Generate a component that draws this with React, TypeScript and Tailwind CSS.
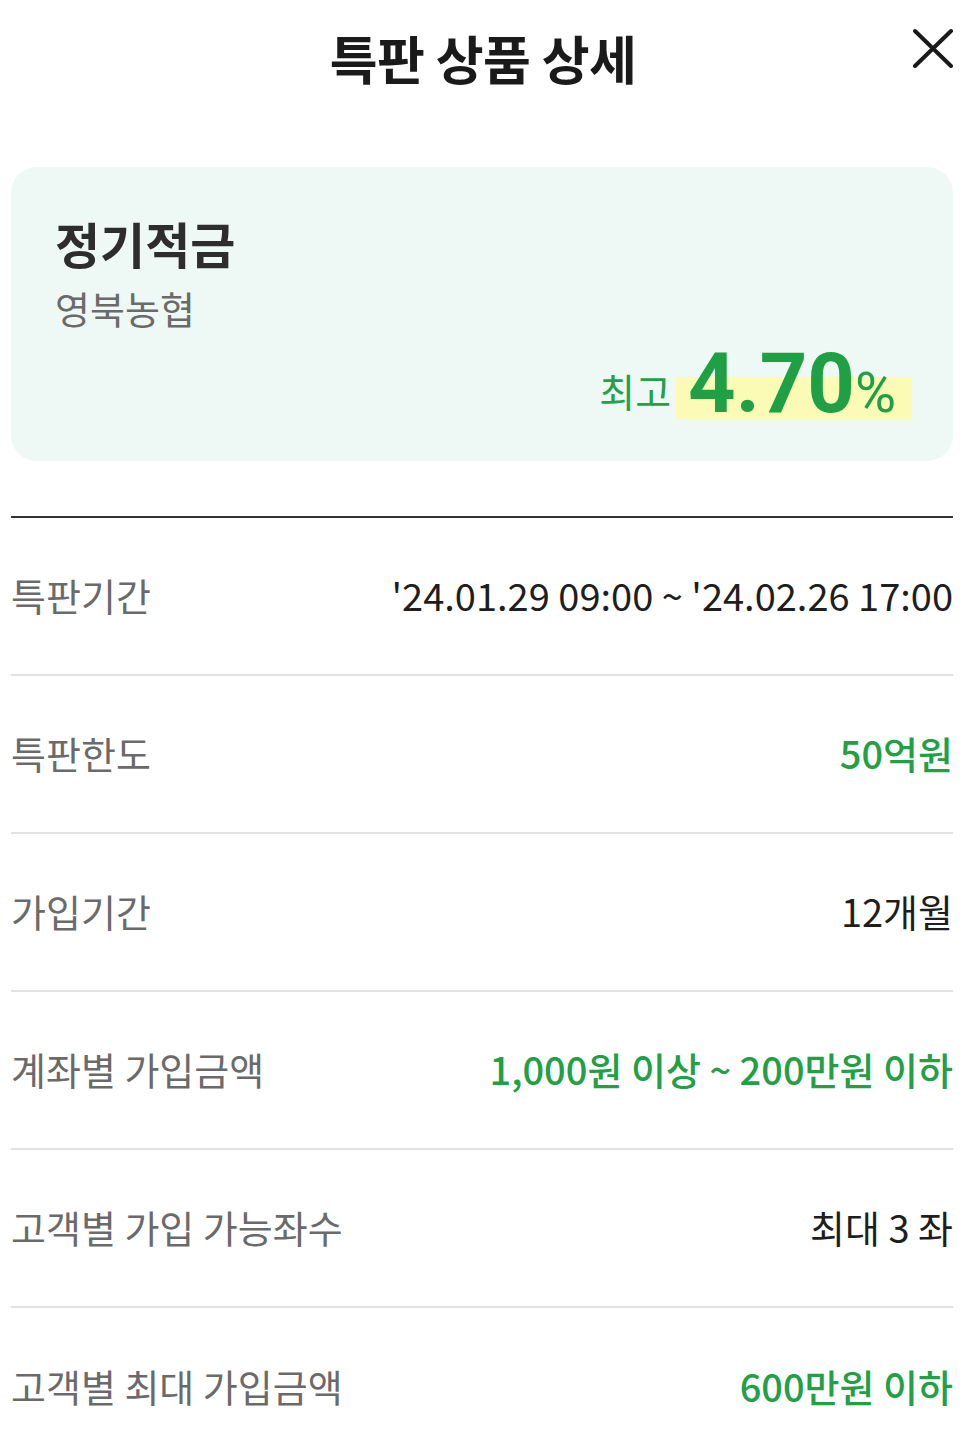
import React from "react";

const rows: { label: string; value: string; green?: boolean }[] = [
  { label: "특판기간", value: "'24.01.29 09:00 ~ '24.02.26 17:00" },
  { label: "특판한도", value: "50억원", green: true },
  { label: "가입기간", value: "12개월" },
  { label: "계좌별 가입금액", value: "1,000원 이상 ~ 200만원 이하", green: true },
  { label: "고객별 가입 가능좌수", value: "최대 3 좌" },
  { label: "고객별 최대 가입금액", value: "600만원 이하", green: true },
];

export default function App() {
  return (
    <div
      className="w-[966px] h-[1448px] overflow-hidden bg-white"
      style={{ fontFamily: '"Noto Sans CJK KR", "Noto Sans", sans-serif' }}
    >
      <div className="relative flex h-[116px] items-center justify-center">
        <h1 className="text-[52px] font-bold leading-none text-[#1a1a1a] tracking-[-0.5px]">
          특판 상품 상세
        </h1>
        <button className="absolute right-[13px] top-[28px] h-[40px] w-[40px]">
          <svg viewBox="0 0 40 40" className="h-[40px] w-[40px]">
            <path d="M2 3 L38 38 M38 3 L2 38" stroke="#1a1a1a" strokeWidth="4" strokeLinecap="round" fill="none" />
          </svg>
        </button>
      </div>

      <div className="pl-[11px] pr-[13px]">
        <div className="mt-[51px] h-[294px] rounded-[26px] bg-[#eef9f5] pl-[44px] pr-[41px] pt-[47px] flex flex-col">
          <div className="text-[49px] font-bold leading-[1.2] text-[#2d2d2d]">정기적금</div>
          <div className="mt-[12px] text-[38px] leading-[1.2] text-[#6a6a6a]">영북농협</div>
          <div className="mt-[12px] flex items-baseline justify-end">
            <span className="relative bottom-[5px] text-[39px] leading-none text-[#25a04a] mr-[5px]">최고</span>
            <span className="relative inline-flex items-baseline pl-[12px] pr-[16px]">
              <span className="absolute left-0 right-0 bottom-[6px] h-[42px] bg-[#fbfbb6]" />
              <span
                className="relative text-[83px] font-bold leading-none text-[#1fa045]"
                style={{ fontFamily: "Roboto, sans-serif" }}
              >
                4.70
              </span>
              <span
                className="relative text-[56px] leading-none text-[#1fa045]"
                style={{ fontFamily: "Roboto, sans-serif" }}
              >
                %
              </span>
            </span>
          </div>
        </div>

        <div className="mt-[55px] h-[2px] bg-[#333333]" />

        {rows.map((r, i) => (
          <div
            key={i}
            className={`flex h-[158px] items-center justify-between pb-[4px] ${
              i < rows.length - 1 ? "border-b-2 border-[#e2e2e2]" : ""
            }`}
          >
            <span className="text-[38px] text-[#6a6a6a]">{r.label}</span>
            <span
              className={`text-[38px] ${
                r.green ? "font-medium text-[#22a046]" : "text-[#1e1e1e]"
              }`}
            >
              {r.value}
            </span>
          </div>
        ))}
      </div>
    </div>
  );
}
